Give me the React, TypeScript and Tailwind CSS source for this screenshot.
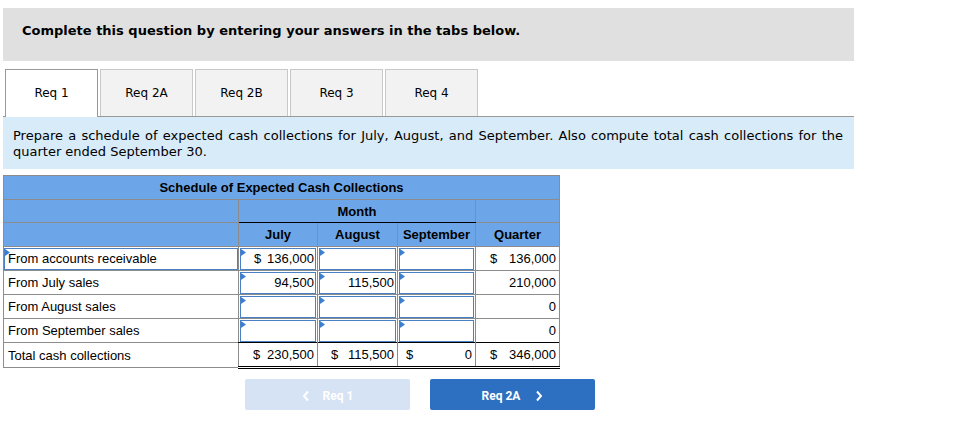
import React from "react";

const verdana = { fontFamily: '"DejaVu Sans", Verdana, sans-serif' };
const arial = { fontFamily: '"Liberation Sans", Arial, sans-serif' };

function Tri() {
  return (
    <svg className="absolute left-0 top-0" width="5" height="7" viewBox="0 0 5 7">
      <path d="M0 0L5 3.5L0 7Z" fill="#3a7fd5" />
    </svg>
  );
}

function InCell({ dollar, value, dl = "pl-[13px]" }: { dollar?: boolean; value?: string; dl?: string }) {
  return (
    <td className="border border-[#8c8c8c] p-0 align-middle">
      <div className="relative mx-[1px] flex h-[22px] items-center justify-between border border-[#4a80c4] bg-white">
        <Tri />
        <span className={dl}>{dollar ? "$" : ""}</span>
        <span className="pr-[1px]">{value ?? ""}</span>
      </div>
    </td>
  );
}

function NumCell({ dollar, value, dl = "pl-[13px]", extra = "" }: { dollar?: boolean; value?: string; dl?: string; extra?: string }) {
  return (
    <td className={`border border-[#8c8c8c] p-0 align-middle ${extra}`}>
      <div className="flex h-[22px] items-center justify-between">
        <span className={dl}>{dollar ? "$" : ""}</span>
        <span className="pr-[3px]">{value ?? ""}</span>
      </div>
    </td>
  );
}

export default function App() {
  const tabs = ["Req 1", "Req 2A", "Req 2B", "Req 3", "Req 4"];
  return (
    <div className="min-h-[439px] w-[972px] bg-white pl-[3px] pt-[8px] text-black">
      <div className="w-[851px]">
        <div className="h-[53px] bg-[#e0e0e0] pl-[19px] pt-[15px] text-[13px] font-bold leading-[16px]" style={verdana}>
          Complete this question by entering your answers in the tabs below.
        </div>

        <div className="mt-[8px] flex h-[48px] items-end gap-[2px] border-b border-[#999999] pl-[2px]" style={verdana}>
          {tabs.map((t, i) =>
            i === 0 ? (
              <div
                key={t}
                className="relative -mb-px flex h-[48px] w-[93px] items-center justify-center border border-b-0 border-[#999999] bg-white pb-[1px] text-[12px]"
              >
                {t}
              </div>
            ) : (
              <div
                key={t}
                className="flex h-[47px] w-[93px] items-center justify-center border border-b-0 border-[#c8c8c8] bg-[#f2f2f2] text-[12px]"
              >
                {t}
              </div>
            )
          )}
        </div>

        <div className="bg-[#d8ebf9] pb-[9px] pl-[10px] pr-[11px] pt-[11px] text-justify text-[13px] leading-[16px]" style={verdana}>
          Prepare a schedule of expected cash collections for July, August, and September. Also compute total cash collections for the quarter ended September 30.
        </div>
      </div>

      <table className="mt-[6px] w-[556px] table-fixed border-collapse text-[13px] leading-[15px]" style={arial}>
        <colgroup>
          <col className="w-[235px]" />
          <col className="w-[79px]" />
          <col className="w-[80px]" />
          <col className="w-[78px]" />
          <col className="w-[84px]" />
        </colgroup>
        <tbody>
          <tr className="h-[24px] bg-[#6ca6e8] font-bold">
            <td colSpan={5} className="border border-[#8c8c8c] text-center">
              Schedule of Expected Cash Collections
            </td>
          </tr>
          <tr className="h-[23px] bg-[#6ca6e8] font-bold">
            <td className="border border-[#8c8c8c]"></td>
            <td colSpan={3} className="border border-[#8c8c8c] border-b-black text-center">
              Month
            </td>
            <td className="border border-[#8c8c8c]"></td>
          </tr>
          <tr className="h-[24px] bg-[#6ca6e8] font-bold">
            <td className="border border-[#8c8c8c]"></td>
            <td className="border border-[#8c8c8c] text-center">July</td>
            <td className="border border-[#8c8c8c] text-center">August</td>
            <td className="border border-[#8c8c8c] text-center">September</td>
            <td className="border border-[#8c8c8c] text-center">Quarter</td>
          </tr>
          <tr className="h-[24px]">
            <td className="border border-[#8c8c8c] p-0">
              <div className="relative flex h-[22px] items-center border border-[#4a80c4] pl-[3px]">
                <Tri />
                From accounts receivable
              </div>
            </td>
            <InCell dollar value="136,000" />
            <InCell />
            <InCell />
            <NumCell dollar value="136,000" dl="pl-[14px]" />
          </tr>
          <tr className="h-[24px]">
            <td className="border border-[#8c8c8c] pl-[4px]">From July sales</td>
            <InCell value="94,500" />
            <InCell value="115,500" />
            <InCell />
            <NumCell value="210,000" />
          </tr>
          <tr className="h-[24px]">
            <td className="border border-[#8c8c8c] pl-[4px]">From August sales</td>
            <InCell />
            <InCell />
            <InCell />
            <NumCell value="0" />
          </tr>
          <tr className="h-[24px]">
            <td className="border border-[#8c8c8c] pl-[4px]">From September sales</td>
            <InCell />
            <InCell />
            <InCell />
            <NumCell value="0" extra="border-b-black" />
          </tr>
          <tr className="h-[25px]">
            <td className="border border-[#8c8c8c] pl-[4px]">Total cash collections</td>
            <NumCell dollar value="230,500" dl="pl-[14px]" extra="border-t-black border-b-[3px] border-b-black border-double" />
            <NumCell dollar value="115,500" dl="pl-[13px]" extra="border-t-black border-b-[3px] border-b-black border-double" />
            <NumCell dollar value="0" dl="pl-[8px]" extra="border-t-black border-b-[3px] border-b-black border-double" />
            <NumCell dollar value="346,000" dl="pl-[14px]" extra="border-t-black border-b-[3px] border-b-black border-double" />
          </tr>
        </tbody>
      </table>

      <div className="ml-[242px] mt-[10px] flex gap-[20px] text-[12px] font-bold text-white" style={{ fontFamily: 'Roboto, "Noto Sans", sans-serif' }}>
        <div className="flex h-[31px] w-[165px] items-center justify-center gap-[13px] rounded-[2px] bg-[#d6e3f4] pt-[2px]">
          <svg width="8" height="12" viewBox="0 0 8 12">
            <path d="M6 1.5L2 6L6 10.5" fill="none" stroke="#ffffff" strokeWidth="2" />
          </svg>
          <span>Req 1</span>
        </div>
        <div className="flex h-[31px] w-[165px] items-center justify-center gap-[15px] rounded-[2px] bg-[#2d6fc0] pt-[2px]">
          <span>Req 2A</span>
          <svg width="8" height="12" viewBox="0 0 8 12">
            <path d="M2 1.5L6 6L2 10.5" fill="none" stroke="#ffffff" strokeWidth="2" />
          </svg>
        </div>
      </div>
    </div>
  );
}
